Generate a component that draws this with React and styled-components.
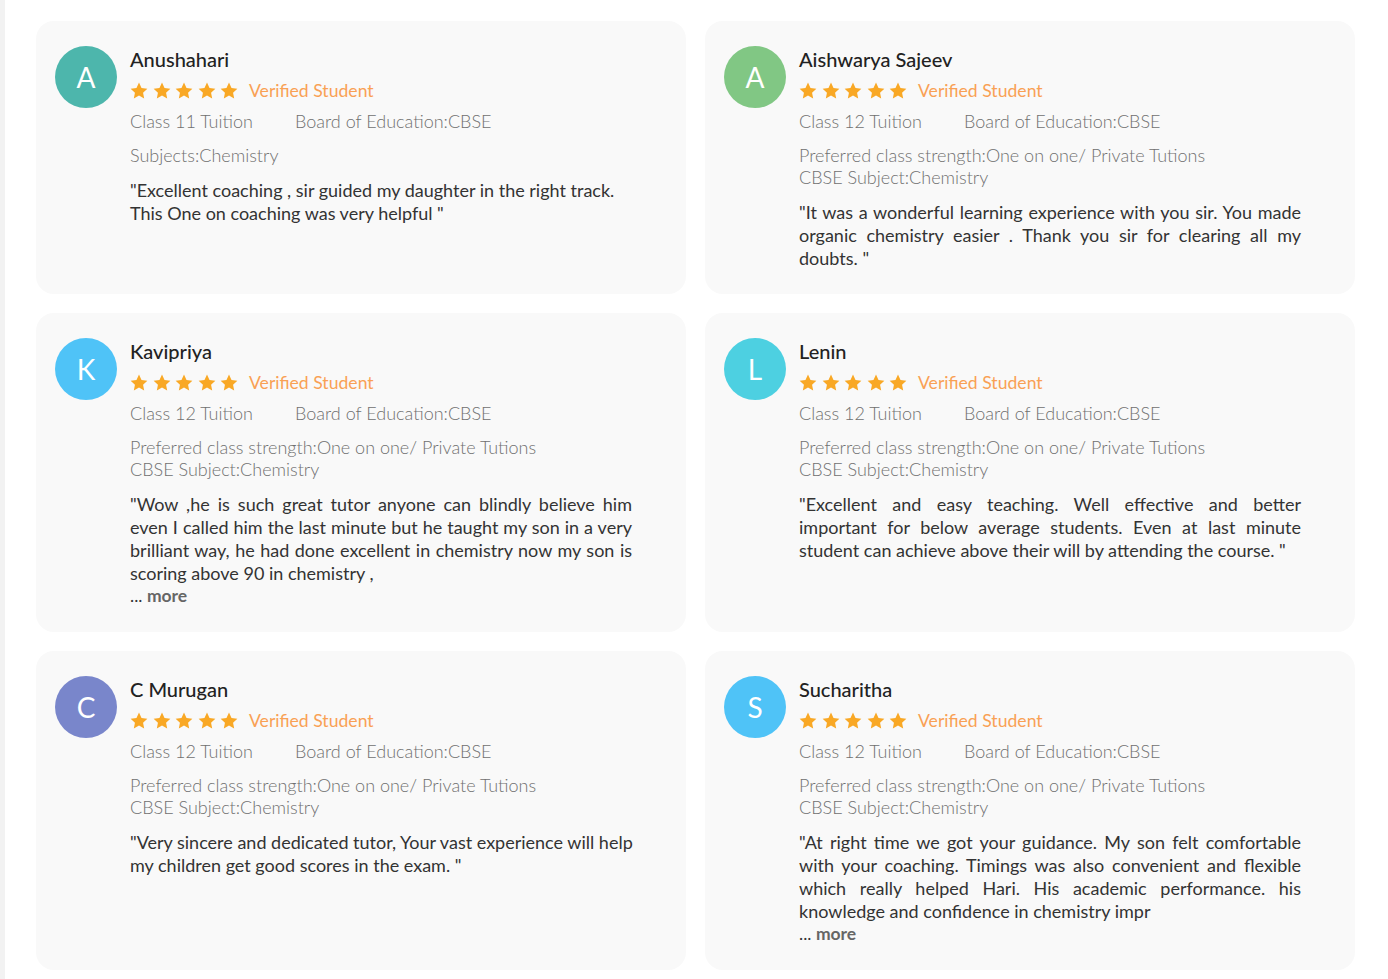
import React from "react";
import styled, { createGlobalStyle } from "styled-components";

const GlobalStyle = createGlobalStyle`
  body {
    margin: 0;
    background: #ffffff;
    font-family: Lato, "Open Sans", sans-serif;
  }
`;

const Page = styled.div`
  min-height: 979px;
  box-sizing: border-box;
  border-left: 5px solid #f2f2f2;
  padding: 21px 33px 10px 31px;
`;

const Grid = styled.div`
  display: grid;
  grid-template-columns: 650px 650px;
  gap: 19px;
`;

const Card = styled.div`
  display: flex;
  gap: 13px;
  background: #f9f9f9;
  border-radius: 18px;
  padding: 25px 54px 25px 19px;
`;

const Avatar = styled.div`
  flex: 0 0 62px;
  width: 62px;
  height: 62px;
  border-radius: 50%;
  background: ${(p) => p.color};
  color: #fff;
  display: flex;
  align-items: center;
  justify-content: center;
  font-size: 28px;
  font-weight: 400;
`;

const Body = styled.div`
  flex: 1;
  min-width: 0;
`;

const Name = styled.div`
  font-size: 20px;
  line-height: 26px;
  font-weight: 500;
  color: #222;
`;

const RatingRow = styled.div`
  display: flex;
  align-items: center;
  gap: 11px;
  height: 26px;
  margin-top: 5px;
`;

const Stars = styled.div`
  display: flex;
  gap: 4.5px;
`;

const Verified = styled.span`
  color: #f9a155;
  font-size: 17.6px;
  font-weight: 400;
`;

const MetaRow = styled.div`
  display: flex;
  margin-top: 6px;
  font-size: 18px;
  line-height: 24px;
  font-weight: 300;
  color: #707070;
`;

const ClassLabel = styled.span`
  width: 165px;
`;

const Extra = styled.div`
  margin-top: 11px;
  font-size: 18px;
  line-height: 22px;
  font-weight: 300;
  color: #707070;
`;

const Quote = styled.div`
  margin-top: 13px;
  font-size: 18px;
  line-height: 22.8px;
  color: #333;
`;

const Line = styled.div`
  white-space: nowrap;
  text-align: ${(p) => (p.$fill ? "justify" : "left")};
  text-align-last: ${(p) => (p.$fill ? "justify" : "left")};
`;

const More = styled.div`
  font-size: 17.5px;
  line-height: 22.8px;
  color: #333;

  b {
    color: #666;
    font-weight: 700;
  }
`;

const Star = () => (
  <svg width="18" height="17" viewBox="0 0 24 23">
    <path
      d="M12 0.8l3.4 7.2 7.9 1-5.8 5.4 1.5 7.8L12 18.4l-7 3.8 1.5-7.8L0.7 9l7.9-1z"
      fill="#f9a825"
    />
  </svg>
);

const tuition = ["Preferred class strength:One on one/ Private Tutions", "CBSE Subject:Chemistry"];

const reviews = [
  {
    initial: "A",
    color: "#4db6ac",
    name: "Anushahari",
    cls: "Class 11 Tuition",
    extra: ["Subjects:Chemistry"],
    justify: false,
    lines: [
      "\"Excellent coaching , sir guided my daughter in the right track.",
      "This One on coaching was very helpful \"",
    ],
  },
  {
    initial: "A",
    color: "#81c784",
    name: "Aishwarya Sajeev",
    cls: "Class 12 Tuition",
    extra: tuition,
    justify: true,
    lines: [
      "\"It was a wonderful learning experience with you sir. You made",
      "organic chemistry easier . Thank you sir for clearing all my",
      "doubts. \"",
    ],
  },
  {
    initial: "K",
    color: "#4fc3f7",
    name: "Kavipriya",
    cls: "Class 12 Tuition",
    extra: tuition,
    justify: true,
    more: true,
    lines: [
      "\"Wow ,he is such great tutor anyone can blindly believe him",
      "even I called him the last minute but he taught my son in a very",
      "brilliant way, he had done excellent in chemistry now my son is",
      "scoring above 90 in chemistry ,",
    ],
  },
  {
    initial: "L",
    color: "#4dd0e1",
    name: "Lenin",
    cls: "Class 12 Tuition",
    extra: tuition,
    justify: true,
    lines: [
      "\"Excellent and easy teaching. Well effective and better",
      "important for below average students. Even at last minute",
      "student can achieve above their will by attending the course. \"",
    ],
  },
  {
    initial: "C",
    color: "#7986cb",
    name: "C Murugan",
    cls: "Class 12 Tuition",
    extra: tuition,
    justify: false,
    lines: [
      "\"Very sincere and dedicated tutor, Your vast experience will help",
      "my children get good scores in the exam. \"",
    ],
  },
  {
    initial: "S",
    color: "#4fc3f7",
    name: "Sucharitha",
    cls: "Class 12 Tuition",
    extra: tuition,
    justify: true,
    more: true,
    lines: [
      "\"At right time we got your guidance. My son felt comfortable",
      "with your coaching. Timings was also convenient and flexible",
      "which really helped Hari. His academic performance. his",
      "knowledge and confidence in chemistry impr",
    ],
  },
];

export default function App() {
  return (
    <Page>
      <GlobalStyle />
      <Grid>
        {reviews.map((r, i) => (
          <Card key={i}>
            <Avatar color={r.color}>{r.initial}</Avatar>
            <Body>
              <Name>{r.name}</Name>
              <RatingRow>
                <Stars>
                  {[0, 1, 2, 3, 4].map((s) => (
                    <Star key={s} />
                  ))}
                </Stars>
                <Verified>Verified Student</Verified>
              </RatingRow>
              <MetaRow>
                <ClassLabel>{r.cls}</ClassLabel>
                <span>Board of Education:CBSE</span>
              </MetaRow>
              <Extra>
                {r.extra.map((e, j) => (
                  <div key={j}>{e}</div>
                ))}
              </Extra>
              <Quote>
                {r.lines.map((l, j) => (
                  <Line key={j} $fill={r.justify && j < r.lines.length - 1}>
                    {l}
                  </Line>
                ))}
              </Quote>
              {r.more && (
                <More>
                  ... <b>more</b>
                </More>
              )}
            </Body>
          </Card>
        ))}
      </Grid>
    </Page>
  );
}
